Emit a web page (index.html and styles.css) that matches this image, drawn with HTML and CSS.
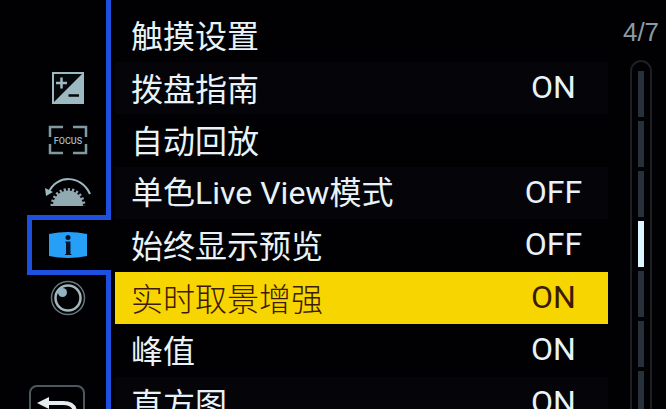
FILE: index.html
```html
<!DOCTYPE html>
<html lang="zh-CN">
<head>
    <meta charset="UTF-8">
    <meta name="viewport" content="width=device-width, initial-scale=1.0">
    <title>自定义菜单</title>
    <link rel="stylesheet" href="styles.css">
</head>
<body>
    <div class="screen">
        <nav class="rail">
            <div class="rail-cell rail-top"></div>
            <button type="button" class="rail-cell" aria-label="曝光">
                <svg width="34" height="34" viewBox="0 0 34 34">
                    <rect x="2" y="2" width="30" height="30" fill="#05080a" stroke="#9db9c2" stroke-width="2"/>
                    <path d="M32 2V32H2Z" fill="#9db9c2"/>
                    <path d="M5 12H16M10.500 6.500V17.500" stroke="#9db9c2" stroke-width="2.500"/>
                    <path d="M17.500 24.500H28" stroke="#05080a" stroke-width="2.500"/>
                </svg>
            </button>
            <button type="button" class="rail-cell" aria-label="对焦">
                <svg width="40" height="30" viewBox="0 0 40 30">
                    <path d="M2 12V2H15M25 2H38V12M38 19V28H25M15 28H2V19" fill="none" stroke="#819aa2" stroke-width="2.500"/>
                    <text class="focus-text" x="20" y="19" text-anchor="middle">FOCUS</text>
                </svg>
            </button>
            <button type="button" class="rail-cell" aria-label="操作">
                <svg width="48" height="32" viewBox="0 0 48 32">
                    <path d="M5 15C12 -2 37 -3 46 17" fill="none" stroke="#9db9c2" stroke-width="2"/>
                    <path d="M1 11L2 19L9 15Z" fill="#9db9c2"/>
                    <path d="M9 29A15 15.500 0 0 1 39 29Z" fill="#91a9b0"/>
                    <path d="M8 29A16 16.500 0 0 1 40 29" fill="none" stroke="#91a9b0" stroke-width="3" stroke-dasharray="2.200 2"/>
                </svg>
            </button>
            <button type="button" class="rail-cell rail-active" aria-label="显示">
                <svg width="40" height="28" viewBox="0 0 40 28">
                    <path d="M1 3Q20 -1 39 3V25Q20 29 1 25Z" fill="#269ff7"/>
                    <circle cx="20" cy="6.500" r="2.500" fill="#06142b"/>
                    <path d="M17.500 10.500H22.500V23H23.500V24H17V23H18V12H17.500Z" fill="#06142b"/>
                </svg>
            </button>
            <button type="button" class="rail-cell" aria-label="镜头">
                <svg width="36" height="36" viewBox="0 0 36 36">
                    <circle cx="18" cy="18" r="16.500" fill="none" stroke="#65777c" stroke-width="1.500"/>
                    <circle cx="18" cy="18" r="12.500" fill="none" stroke="#a3b7bc" stroke-width="2.500"/>
                    <circle cx="12.500" cy="12.500" r="4.500" fill="#91b4c3"/>
                </svg>
            </button>
            <div class="rail-cell"></div>
            <div class="rail-cell rail-bottom">
                <button type="button" class="back" aria-label="返回">
                    <svg width="40" height="32" viewBox="0 0 40 32">
                        <path d="M10 11H26Q38 11 38 21V29H14" fill="none" stroke="#e6edf0" stroke-width="4"/>
                        <path d="M0 11L12 5V17Z" fill="#e6edf0"/>
                    </svg>
                </button>
            </div>
        </nav>

        <main class="menu">
            <button type="button" class="row"><span class="label">触摸设置</span></button>
            <button type="button" class="row"><span class="label">拨盘指南</span><span class="value">ON</span></button>
            <button type="button" class="row"><span class="label">自动回放</span></button>
            <button type="button" class="row"><span class="label">单色<span class="latin">Live View</span>模式</span><span class="value">OFF</span></button>
            <button type="button" class="row"><span class="label">始终显示预览</span><span class="value">OFF</span></button>
            <button type="button" class="row selected"><span class="label">实时取景增强</span><span class="value">ON</span></button>
            <button type="button" class="row"><span class="label">峰值</span><span class="value">ON</span></button>
            <button type="button" class="row"><span class="label">直方图</span><span class="value">ON</span></button>
        </main>

        <aside class="pager">
            <div class="page-number">4/7</div>
            <div class="track">
                <span class="page"></span>
                <span class="page"></span>
                <span class="page"></span>
                <span class="page current"></span>
                <span class="page"></span>
                <span class="page"></span>
                <span class="page"></span>
            </div>
        </aside>
    </div>
</body>
</html>
```
FILE: styles.css
```css
* {
    margin: 0;
    padding: 0;
    box-sizing: border-box;
}

body {
    background: #010103;
    overflow: hidden;
}

button {
    background: none;
    border: none;
    color: inherit;
    font: inherit;
    cursor: pointer;
}

.screen {
    display: flex;
    height: 100vh;
    overflow: hidden;
    color: #e8f3f9;
    font-family: "Noto Sans CJK SC", sans-serif;
    font-size: 32px;
    line-height: 40px;
}

/* both lists run a little past the bottom edge */
.rail,
.menu {
    display: grid;
    height: calc(100vh + 20px);
}

.rail {
    grid-template-rows: 9px repeat(8, 1fr);
    width: 111px;
    padding-left: 27px;
    flex-shrink: 0;
}

.rail-cell {
    display: flex;
    align-items: center;
    justify-content: center;
    min-height: 0;
    padding-left: 2px;
    border-right: 5px solid #1d50df;
}

.rail-top {
    grid-row: span 2;
}

.rail-active {
    margin: -4px 0 -3px;
    padding: 0 8px 0 0;
    border: 5px solid #1d50df;
    border-right: none;
}

.rail-bottom {
    align-items: flex-start;
    justify-content: flex-start;
    padding-top: 8px;
}

.focus-text {
    font-family: Roboto, sans-serif;
    font-size: 9px;
    font-weight: 500;
    fill: #9db9c2;
}

.back {
    display: flex;
    align-items: center;
    justify-content: center;
    width: 56px;
    height: 46px;
    flex-shrink: 0;
    border: 2px solid #4c595c;
    border-radius: 8px;
}

.menu {
    flex: 1;
    grid-template-rows: repeat(8, 1fr);
    padding-top: 9px;
    margin-left: 4px;
}

.row {
    display: flex;
    align-items: center;
    min-height: 0;
    padding: 0 0 2px 16px;
    text-align: left;
}

.row:nth-child(even) {
    background: #040409;
}

.row.selected {
    background: #f6d500;
    color: #3c1a05;
}

.label {
    flex: 1;
    white-space: nowrap;
}

.latin,
.value {
    font-family: Roboto, sans-serif;
}

.value {
    width: 109px;
    text-align: center;
}

.selected .label {
    font-weight: 300;
}

.pager {
    display: flex;
    flex-direction: column;
    align-items: center;
    width: 58px;
    padding: 12px 4px 0 12px;
    flex-shrink: 0;
}

.page-number {
    color: #8b9ba5;
    font-family: "Liberation Sans", sans-serif;
    font-size: 26px;
}

.track {
    display: flex;
    flex-direction: column;
    flex-shrink: 0;
    align-items: center;
    gap: 4px;
    width: 22px;
    margin-top: 8px;
    padding: 9px 0;
    border: 2px solid #1e1f24;
    border-radius: 11px;
}

.page {
    width: 6px;
    height: 46px;
    background: #27313c;
}

.page.current {
    background: #dcf6ff;
}
```
